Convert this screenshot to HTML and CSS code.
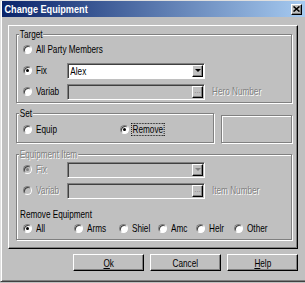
FILE: index.html
```html
<!DOCTYPE html>
<html>
<head>
  <title>Change Equipment</title>
  <link rel="stylesheet" href="styles.css">
</head>
<body>
  <div class="window">
    <div class="titlebar">
      <span class="title">Change Equipment</span>
      <span class="close">
        <svg width="7" height="6" viewBox="0 0 7 6"><path d="M0.5 0.5 L6.5 5.5 M6.5 0.5 L0.5 5.5" stroke="#000" stroke-width="1.6"/></svg>
      </span>
    </div>

    <div class="panel">
      <div class="group target">
        <div class="group-label">Target</div>
        <div class="row">
          <span class="radio"></span><span class="text">All Party Members</span>
        </div>
        <div class="row">
          <span class="radio checked"></span><span class="text name">Fix</span>
          <div class="combo"><span class="value">Alex</span><span class="drop"><i class="arrow"></i></span></div>
        </div>
        <div class="row">
          <span class="radio"></span><span class="text name">Variab</span>
          <div class="combo off"><span class="value"></span><span class="drop"><i class="dots">...</i></span></div>
          <span class="text hint off">Hero Number</span>
        </div>
      </div>

      <div class="set-line">
        <div class="group set">
          <div class="group-label">Set</div>
          <div class="row">
            <label class="opt equip"><span class="radio"></span><span class="text">Equip</span></label>
            <label class="opt"><span class="radio checked"></span><span class="text focus">Remove</span></label>
          </div>
        </div>
        <div class="group blank"></div>
      </div>

      <div class="group item">
        <div class="group-label off">Equipment Item</div>
        <div class="row">
          <span class="radio checked off"></span><span class="text name off">Fix</span>
          <div class="combo off"><span class="value"></span><span class="drop"><i class="arrow"></i></span></div>
        </div>
        <div class="row">
          <span class="radio off"></span><span class="text name off">Variab</span>
          <div class="combo off"><span class="value"></span><span class="drop"><i class="dots">...</i></span></div>
          <span class="text hint off">Item Number</span>
        </div>
        <div class="sub-label">Remove Equipment</div>
        <div class="row kinds">
          <label class="opt w-all"><span class="radio checked"></span><span class="text">All</span></label>
          <label class="opt w-arms"><span class="radio"></span><span class="text">Arms</span></label>
          <label class="opt w-shiel"><span class="radio"></span><span class="text">Shiel</span></label>
          <label class="opt w-armo"><span class="radio"></span><span class="text">Amc</span></label>
          <label class="opt w-helm"><span class="radio"></span><span class="text">Helr</span></label>
          <label class="opt"><span class="radio"></span><span class="text">Other</span></label>
        </div>
      </div>
    </div>

    <div class="buttons">
      <div class="button"><span class="caption"><u>O</u>k</span></div>
      <div class="button"><span class="caption">Cancel</span></div>
      <div class="button"><span class="caption"><u>H</u>elp</span></div>
    </div>
  </div>
</body>
</html>
```

FILE: styles.css
```css
body {
  margin: 0;
  background-color: #c0c0c0;
  color: #000;
  font-family: "Liberation Sans", Arial, sans-serif;
  font-size: 10.5px;
  overflow: hidden;
}

/* the old dialog font is narrower than Arial */
.text,
.group-label,
.sub-label {
  transform: scaleX(0.78);
  transform-origin: left center;
}

.window {
  width: 307px;
  height: 282px;
  box-sizing: border-box;
  border: 1px solid;
  border-color: #dfdfdf #404040 #404040 #dfdfdf;
  box-shadow: inset 1px 1px 0 #fff, inset -1px -1px 0 #808080;
  padding: 0 1px 1px 1px;
}

.titlebar {
  height: 16px;
  display: flex;
  align-items: center;
  justify-content: space-between;
  background: linear-gradient(to right, #0a246a, #a6caf0);
}

.titlebar .title {
  padding-left: 3px;
  color: #fff;
  font-weight: bold;
  font-size: 11px;
  line-height: 16px;
  transform: scaleX(0.83);
  transform-origin: left center;
}

.titlebar .close {
  width: 11px;
  height: 11px;
  margin-right: 3px;
  box-sizing: border-box;
  display: flex;
  align-items: center;
  justify-content: center;
  background-color: #c0c0c0;
  border: 1px solid;
  border-color: #fff #000 #000 #fff;
  box-shadow: inset -1px -1px 0 #808080;
}

.panel {
  margin: 8px 0 0 6px;
  width: 290px;
  height: 224px;
  box-sizing: border-box;
  border: 1px solid;
  border-color: #fff #000 #000 #fff;
  box-shadow: inset -1px -1px 0 #808080;
  padding: 0 5px 0 7px;
}

.group {
  border: 1px solid #808080;
  box-shadow: 1px 1px 0 #fff, inset 1px 1px 0 #fff;
}

.group-label {
  width: fit-content;
  height: 10px;
  line-height: 10px;
  margin: -6px 0 0 2px;
  padding: 0 1px;
  background-color: #c0c0c0;
}

.target {
  margin-top: 8px;
}

.row {
  display: flex;
  align-items: center;
  height: 21px;
  padding-left: 6px;
}

.radio {
  flex: none;
  width: 9px;
  height: 9px;
  box-sizing: border-box;
  border-radius: 50%;
  border: 1px solid;
  border-color: #808080 #fff #fff #808080;
  box-shadow: inset 1px 1px 0 #404040;
  background-color: #fff;
  display: flex;
  align-items: center;
  justify-content: center;
}

.radio.checked::after {
  content: "";
  width: 3px;
  height: 3px;
  border-radius: 50%;
  background-color: #000;
}

.radio.off {
  background-color: #c0c0c0;
}

.radio.off::after {
  background-color: #808080;
}

.text {
  margin-left: 4px;
  white-space: nowrap;
  line-height: 11px;
}

.text.name {
  width: 31px;
}

.off {
  color: #808080;
  text-shadow: 1px 1px 0 #fff;
}

.combo {
  width: 138px;
  height: 16px;
  box-sizing: border-box;
  display: flex;
  align-items: center;
  border: 1px solid;
  border-color: #808080 #fff #fff #808080;
  box-shadow: inset 1px 1px 0 #404040;
  background-color: #fff;
}

.combo.off {
  background-color: #c0c0c0;
  text-shadow: none;
}

.combo .value {
  padding-left: 3px;
  transform: scaleX(0.78);
  transform-origin: left center;
}

.combo .drop {
  width: 11px;
  height: 12px;
  margin-left: auto;
  margin-right: 1px;
  box-sizing: border-box;
  display: flex;
  align-items: center;
  justify-content: center;
  background-color: #c0c0c0;
  border: 1px solid;
  border-color: #fff #000 #000 #fff;
  box-shadow: inset -1px -1px 0 #808080;
}

.arrow {
  width: 0;
  height: 0;
  border-top: 3px solid #000;
  border-left: 3px solid transparent;
  border-right: 3px solid transparent;
}

.combo.off .arrow {
  border-top-color: #808080;
}

.dots {
  font-style: normal;
  font-size: 8px;
  line-height: 6px;
  color: #808080;
  margin-top: -2px;
}

.hint {
  margin-left: 7px;
}

.set-line {
  display: flex;
  gap: 7px;
  margin-top: 10px;
}

.set {
  width: 198px;
  box-sizing: border-box;
  padding-bottom: 2px;
}

.set .row {
  margin-top: 1px;
}

.blank {
  width: 71px;
  box-sizing: border-box;
  margin-top: 2px;
}

.opt {
  display: flex;
  align-items: center;
}

.opt.equip {
  width: 97px;
}

.text.focus {
  margin-left: 2px;
  padding: 0 1px;
  border: 1px dotted #000;
}

.item {
  margin-top: 11px;
  padding-bottom: 1px;
}

.sub-label {
  height: 10px;
  line-height: 10px;
  margin: 8px 0 0 3px;
}

.kinds {
  height: 19px;
}

.w-all {
  width: 51px;
}

.w-arms {
  width: 45px;
}

.w-shiel {
  width: 39px;
}

.w-armo,
.w-helm {
  width: 38px;
}

.buttons {
  display: flex;
  gap: 6px;
  margin-top: 5px;
  padding-left: 71px;
}

.button {
  width: 71px;
  height: 17px;
  box-sizing: border-box;
  display: flex;
  align-items: center;
  justify-content: center;
  border: 1px solid;
  border-color: #fff #000 #000 #fff;
  box-shadow: inset -1px -1px 0 #808080;
}

.button .caption {
  transform: scaleX(0.78);
}
```
